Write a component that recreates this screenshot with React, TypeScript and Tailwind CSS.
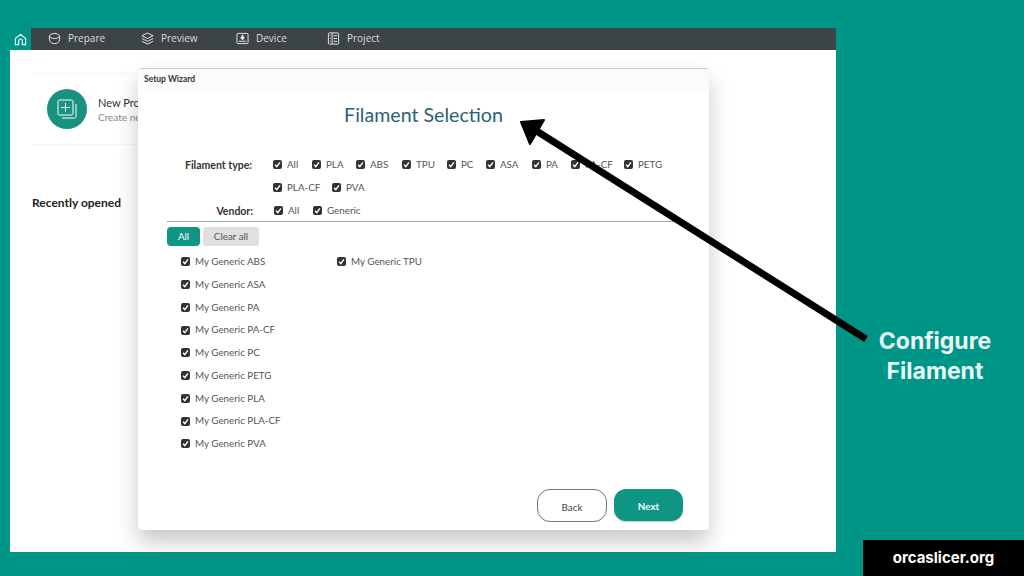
export default function App() {
  const Check = ({ label, w }: { label: string; w: string }) => (
    <div className={`flex items-center gap-[5px] ${w}`}>
      <span className="flex h-[9px] w-[9px] shrink-0 items-center justify-center rounded-[2px] bg-[#333]">
        <svg width="7" height="7" viewBox="0 0 10 10" fill="none" stroke="#fff" strokeWidth="2"><path d="M1.5 5.5 4 8l4.5-6" /></svg>
      </span>
      <span className="whitespace-nowrap text-[9.800px] leading-none text-[#555]">{label}</span>
    </div>
  );
  const list = ["ABS", "ASA", "PA", "PA-CF", "PC", "PETG", "PLA", "PLA-CF", "PVA"];
  return (
    <div className="relative h-[576px] w-[1024px] overflow-hidden bg-[#009687] font-['Lato',sans-serif]">
      <div className="pl-[10px] pt-[28px]">
        <div className="flex h-[524px] w-[826px] flex-col bg-white">
          <div className="flex h-[22px] shrink-0 items-center bg-[#3c4445] pb-[1px] font-['Open_Sans',sans-serif] text-[10px] text-[#dcdcdc]">
            <div className="-mb-[1px] flex h-[22px] w-[21px] items-center justify-center bg-[#009687]">
              <svg width="13" height="13" viewBox="0 0 14 14" fill="none" stroke="#fff" strokeWidth="1.2"><path d="M1.5 12.5V6L7 1.5 12.5 6v6.5H9V8.500a2 2 0 0 0-4 0v4z" /></svg>
            </div>
            <div className="ml-[17px] flex w-[93px] items-center gap-[7px]">
              <svg width="13" height="13" viewBox="0 0 14 14" fill="none" stroke="#eee" strokeWidth="1"><path d="M1.500 4.500C2 2.500 5 1.500 7 1.500s5 1 5.500 3v4c-.5 3-3 4-5.500 4s-5-1-5.500-4zM1.500 4.500c1 2 3.500 2.500 5.500 2.500s4.500-.5 5.500-2.500" /></svg>
              <span>Prepare</span>
            </div>
            <div className="flex w-[95px] items-center gap-[7px]">
              <svg width="13" height="13" viewBox="0 0 14 14" fill="none" stroke="#eee" strokeWidth="1"><path d="M7 1 13 4 7 7 1 4zM1 7l6 3 6-3M1 10l6 3 6-3" /></svg>
              <span>Preview</span>
            </div>
            <div className="flex w-[91px] items-center gap-[7px]">
              <svg width="13" height="13" viewBox="0 0 14 14" fill="none" stroke="#eee" strokeWidth="1"><rect x="1" y="1.500" width="12" height="11" rx="1" /><path d="M3 10h8" /><path d="M7 3v4M5.200 5.500 7 7.500l1.800-2" strokeWidth="1.800" /></svg>
              <span>Device</span>
            </div>
            <div className="flex items-center gap-[7px]">
              <svg width="13" height="13" viewBox="0 0 14 14" fill="none" stroke="#eee" strokeWidth="1"><rect x="1.500" y="1" width="11" height="12" rx="1" /><path d="M5.500 1v12M3 4h1M3 7h1M3 10h1M7 4h4M7 7h4M7 10h4" /></svg>
              <span>Project</span>
            </div>
          </div>
          <div className="px-[22px] pt-[23px]">
            <div className="flex h-[72px] w-[200px] items-center gap-[11px] border-y border-[#f6f6f6] pl-[15px]">
              <div className="flex h-[40px] w-[40px] shrink-0 items-center justify-center rounded-full bg-[#18917f]">
                <svg width="22" height="22" viewBox="0 0 22 22" fill="none" stroke="#fff" strokeWidth="1"><rect x="2" y="2" width="15" height="15" rx="1.500" /><path d="M9.500 5v9M5 9.500h9M20 6v12.500a1.500 1.500 0 0 1-1.500 1.500H6" /></svg>
              </div>
              <div className="whitespace-nowrap pt-[2px] leading-[15px]">
                <div className="text-[11px] text-[#333]">New Project</div>
                <div className="text-[10px] text-[#888]">Create new project</div>
              </div>
            </div>
            <div className="mt-[49px] text-[12px] font-bold text-[#222]">Recently opened</div>
          </div>
        </div>
      </div>

      <div className="absolute left-[138px] top-[68px] flex h-[462px] w-[571px] flex-col rounded-[4px] border-t border-[#ccc] bg-white shadow-[0_12px_22px_rgba(0,0,0,0.22)]">
        <div className="flex h-[21px] shrink-0 items-center rounded-t-[4px] bg-[#fdfbf9] pl-[6px] text-[8.500px] font-bold text-[#333]">Setup Wizard</div>
        <div className="mt-[13px] text-center text-[19.600px] leading-[24px] text-[#2c5f78]">Filament Selection</div>
        <div className="mt-[33px] flex flex-col gap-[13px] pl-[47px] pr-[28px]">
          <div className="flex">
            <div className="w-[68px] whitespace-nowrap text-right text-[10.500px] font-bold leading-[10px] text-[#333]">Filament type:</div>
            <div className="ml-[21px] flex flex-wrap gap-y-[13px]">
              <Check label="All" w="w-[39px]" />
              <Check label="PLA" w="w-[44px]" />
              <Check label="ABS" w="w-[46px]" />
              <Check label="TPU" w="w-[45px]" />
              <Check label="PC" w="w-[39px]" />
              <Check label="ASA" w="w-[46px]" />
              <Check label="PA" w="w-[39px]" />
              <Check label="PA-CF" w="w-[53px]" />
              <Check label="PETG" w="w-[44px]" />
              <Check label="PLA-CF" w="w-[59px]" />
              <Check label="PVA" w="w-[40px]" />
            </div>
          </div>
          <div className="flex">
            <div className="w-[68px] text-right text-[10.500px] font-bold leading-[10px] text-[#333]">Vendor:</div>
            <div className="ml-[21px] flex">
              <Check label="All" w="w-[39px]" />
              <Check label="Generic" w="w-[60px]" />
            </div>
          </div>
        </div>
        <div className="ml-[29px] mr-[28px] mt-[5px] h-px bg-[#8fa8a8]" />
        <div className="ml-[29px] mt-[5px] flex gap-[3px]">
          <div className="flex h-[19px] w-[33px] items-center justify-center rounded-[4px] bg-[#0e9583] text-[9.800px] text-white">All</div>
          <div className="flex h-[19px] w-[56px] items-center justify-center rounded-[3px] bg-[#e0e0e0] text-[9.800px] text-[#555]">Clear all</div>
        </div>
        <div className="ml-[43px] mt-[5px] flex">
          <div className="flex w-[156px] flex-col">
            {list.map((l) => (
              <div key={l} className="flex h-[22.750px] items-center">
                <Check label={`My Generic ${l}`} w="w-full" />
              </div>
            ))}
          </div>
          <div className="flex h-[22.750px] items-center">
            <Check label="My Generic TPU" w="w-[100px]" />
          </div>
        </div>
        <div className="mt-auto flex justify-end gap-[7px] pb-[8px] pr-[26px]">
          <div className="flex h-[33px] w-[70px] items-center justify-center rounded-[13px] border border-[#777] pt-[3px] text-[9.800px] text-[#444]">Back</div>
          <div className="flex h-[32px] w-[69px] items-center justify-center rounded-[12px] bg-[#0e9583] pt-[3px] text-[9.800px] font-bold text-white shadow-[0_1px_1px_rgba(0,0,0,0.2)]">Next</div>
        </div>
      </div>

      <svg className="absolute left-0 top-0" width="1024" height="576" fill="none">
        <path d="M866 339 535 130" stroke="#000" strokeWidth="7" />
        <path d="M521 122 544 120 530 144Z" fill="#000" stroke="#000" strokeWidth="2" strokeLinejoin="round" />
      </svg>

      <div className="absolute left-[846px] top-[326px] w-[178px] text-center font-['Inter',sans-serif] text-[23px] font-bold leading-[30px] text-[#eafaf6]">
        <div>Configure</div>
        <div>Filament</div>
      </div>
      <div className="absolute bottom-0 left-[863px] flex h-[36px] w-[161px] items-center justify-center bg-black font-['Inter',sans-serif] text-[15px] font-bold text-white">orcaslicer.org</div>
    </div>
  );
}
